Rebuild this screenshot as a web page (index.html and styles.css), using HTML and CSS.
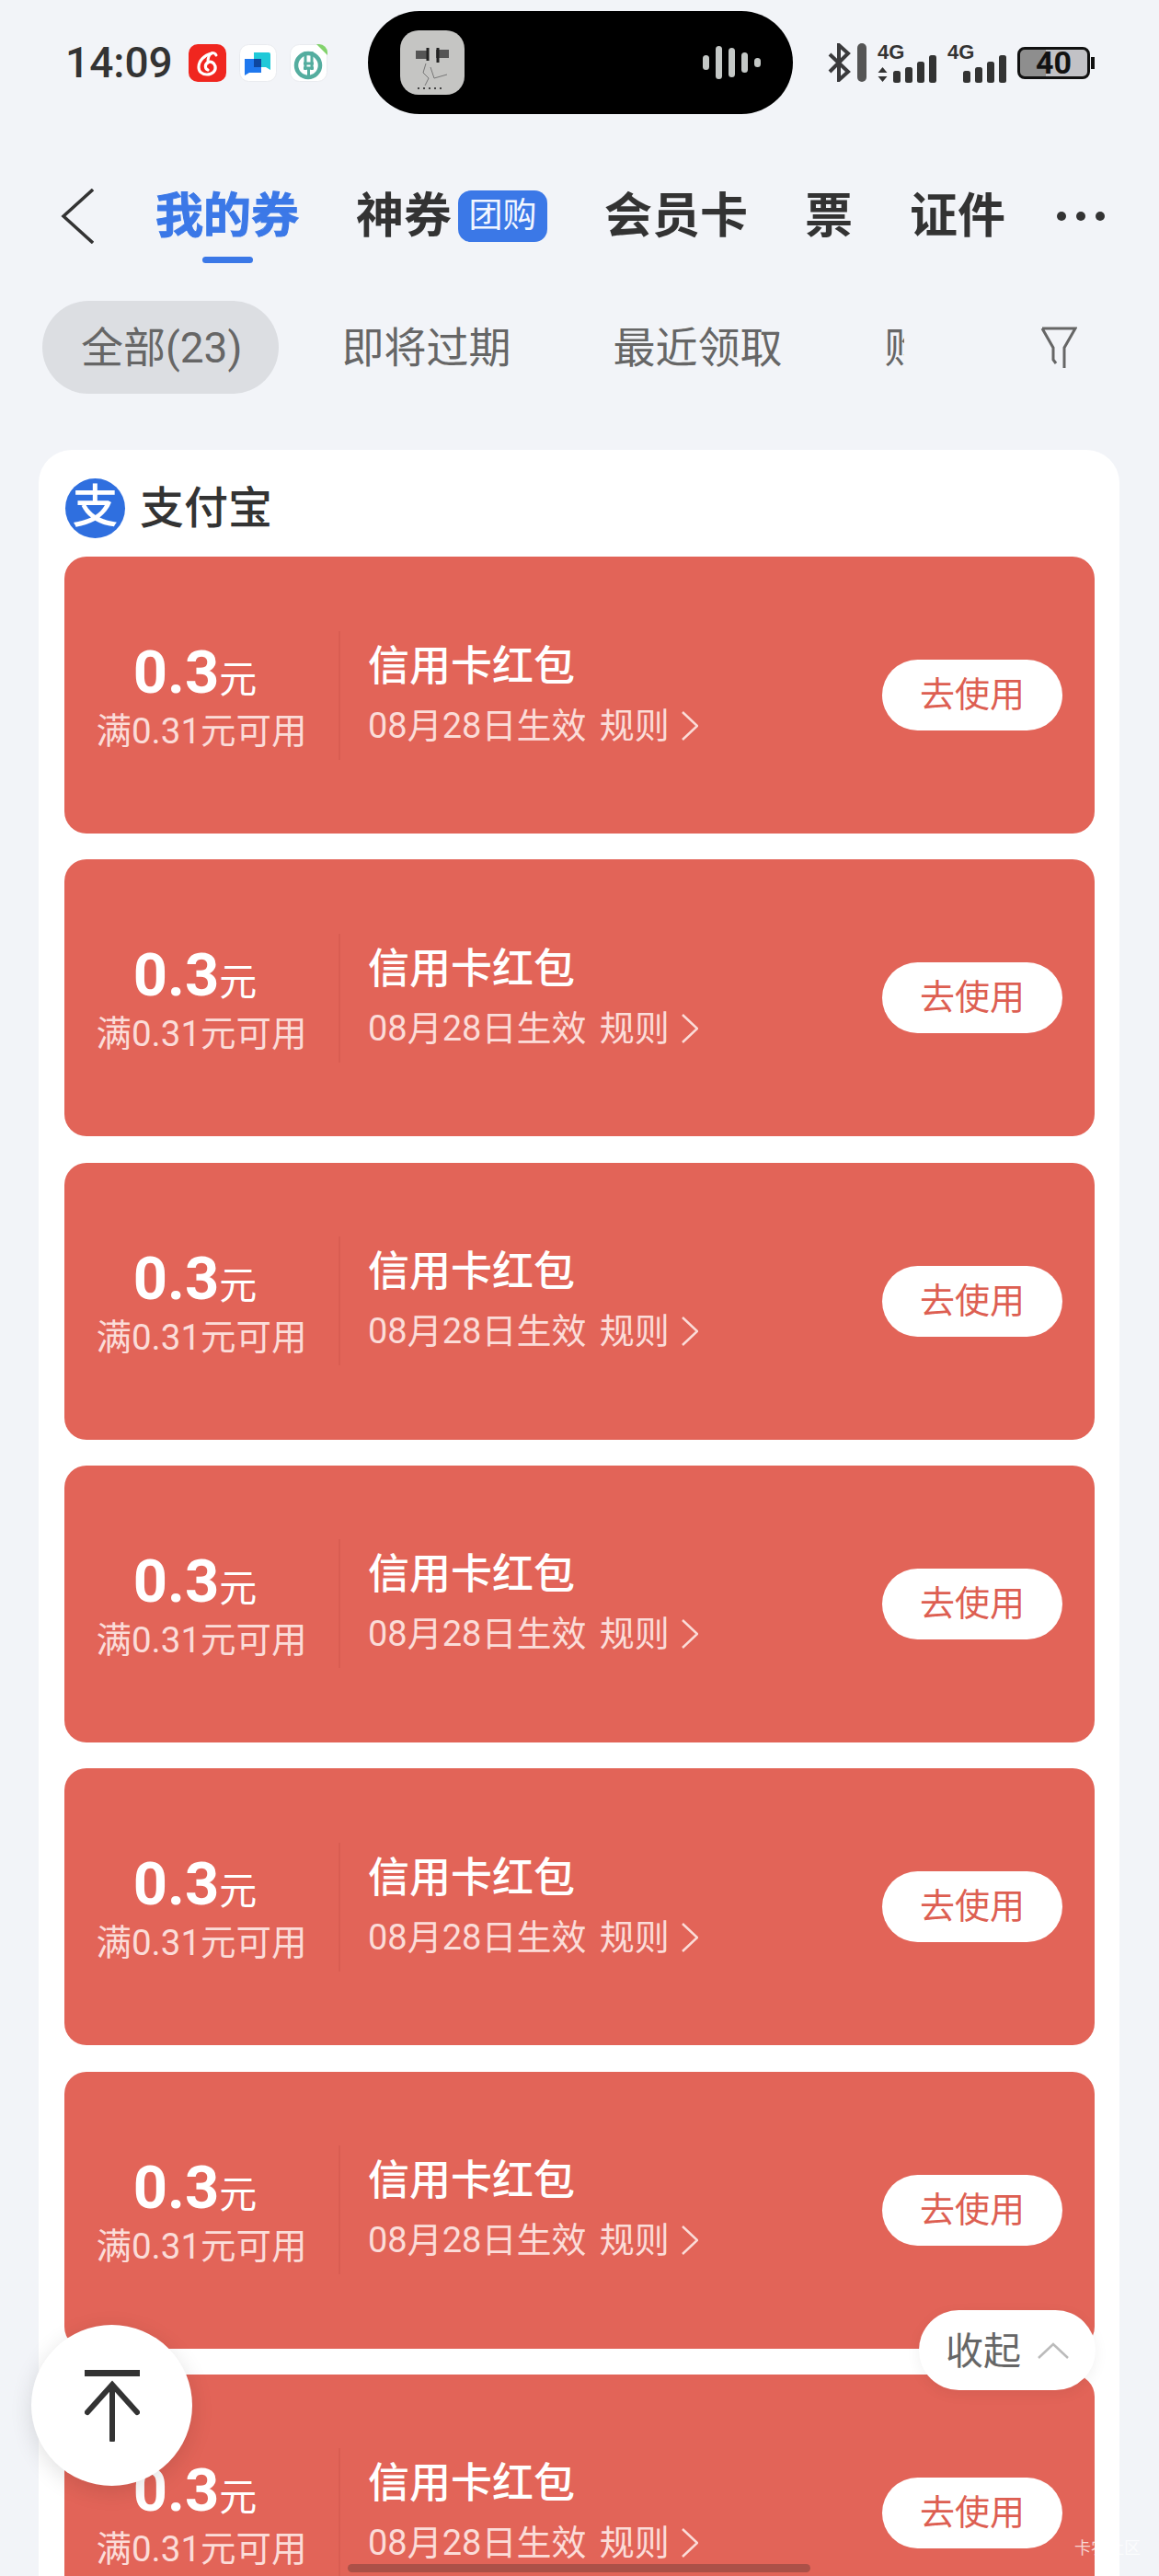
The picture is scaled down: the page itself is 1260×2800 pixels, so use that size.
FILE: index.html
```html
<!DOCTYPE html>
<html lang="zh-CN">

<head>
    <meta charset="UTF-8">
    <meta name="viewport" content="width=device-width, initial-scale=1.0">
    <title>我的券</title>
    <link rel="stylesheet" href="styles.css">
</head>

<body>
    <div class="page">
        <div class="status-bar">
            <span class="time">14:09</span>
            <div class="app-icons">
                <svg class="app-icon" viewBox="0 0 41 41">
                    <rect width="41" height="41" rx="10" fill="#f0261f" />
                    <path d="M25 10C17 12 11 18 11 25c0 5 4 8 9 8 6 0 10-4 9-9-1-4-5-6-8-4-4 2-3 7 0 8" fill="none" stroke="#fff" stroke-width="3.2" stroke-linecap="round" />
                    <path d="M21 20c0-5 1-9 4-10 2-1 4 0 5 2" fill="none" stroke="#fff" stroke-width="3" stroke-linecap="round" />
                </svg>
                <svg class="app-icon" viewBox="0 0 41 41">
                    <rect x="0.5" y="0.5" width="40" height="40" rx="10" fill="#fff" stroke="#e9ebef" />
                    <path d="M16 9h16a2 2 0 0 1 2 2v17l-5-3H16z" fill="#1fc9d8" />
                    <path d="M6 16h16a2 2 0 0 1 2 2v13H11l-5 3z" fill="#1f78ee" />
                    <rect x="16" y="16" width="8" height="9" fill="#0e479f" />
                </svg>
                <svg class="app-icon" viewBox="0 0 41 41">
                    <rect x="0.5" y="0.5" width="40" height="40" rx="10" fill="#fff" stroke="#e9ebef" />
                    <circle cx="20" cy="23" r="13" fill="none" stroke="#54ad9f" stroke-width="4.5" />
                    <path d="M17 8v20M24 8v20M15 21h11M15 26h11M20.500 26v9" fill="none" stroke="#54ad9f" stroke-width="3" />
                    <path d="M29 0h3a9 9 0 0 1 9 9v3z" fill="#82d26c" />
                </svg>
            </div>
            <div class="island">
                <svg class="album" viewBox="0 0 70 70">
                    <rect width="70" height="70" rx="20" fill="#c5c5c3" />
                    <path d="M17 22h12v9H17zM39 21h14v9H39z" fill="#555" />
                    <path d="M30 19v14M41 19v16" stroke="#222" stroke-width="3" />
                    <path d="M28 36l-3 10 6 6-4 8M33 40l4 12 14-4" fill="none" stroke="#777" stroke-width="1" />
                    <path d="M19 63h2M25 63h2M31 63h2M37 63h2M43 63h2" stroke="#444" stroke-width="2" />
                </svg>
                <div class="wave">
                    <span class="wave-bar h16"></span>
                    <span class="wave-bar h36"></span>
                    <span class="wave-bar h32"></span>
                    <span class="wave-bar h22"></span>
                    <span class="wave-bar h10"></span>
                </div>
            </div>
            <div class="status-right">
                <svg class="bluetooth" viewBox="0 0 26 42">
                    <path d="M2 12l20 19-10 9V2l10 9L2 31" fill="none" stroke="#3a3a3c" stroke-width="4" />
                </svg>
                <span class="bt-bar"></span>
                <svg class="signal" viewBox="0 0 64 43">
                    <text x="0" y="17" class="signal-text">4G</text>
                    <path d="M5.500 26l5 6H.5zM5.500 42l5-6H.5z" fill="#333" />
                    <rect x="17" y="30" width="8" height="13" rx="2.500" fill="#333" />
                    <rect x="30" y="26" width="8" height="17" rx="2.500" fill="#333" />
                    <rect x="43" y="20" width="8" height="23" rx="2.500" fill="#333" />
                    <rect x="56" y="13" width="8" height="30" rx="2.500" fill="#333" />
                </svg>
                <svg class="signal" viewBox="0 0 64 43">
                    <text x="0" y="17" class="signal-text">4G</text>
                    <rect x="17" y="30" width="8" height="13" rx="2.500" fill="#333" />
                    <rect x="30" y="26" width="8" height="17" rx="2.500" fill="#333" />
                    <rect x="43" y="20" width="8" height="23" rx="2.500" fill="#333" />
                    <rect x="56" y="13" width="8" height="30" rx="2.500" fill="#333" />
                </svg>
                <div class="battery">40</div>
            </div>
        </div>

        <div class="nav">
            <svg class="back" viewBox="0 0 36 60">
                <path d="M35 1L3 30l32 29" fill="none" stroke="#333" stroke-width="3.500" />
            </svg>
            <span class="tab active">我的券</span>
            <div class="tab-group">
                <span class="tab">神券</span>
                <span class="tab-badge">团购</span>
            </div>
            <span class="tab">会员卡</span>
            <span class="tab">票</span>
            <span class="tab">证件</span>
            <div class="more">
                <span class="dot"></span>
                <span class="dot"></span>
                <span class="dot"></span>
            </div>
        </div>

        <div class="filter-row">
            <div class="filters">
                <span class="filter selected">全部(23)</span>
                <span class="filter">即将过期</span>
                <span class="filter">最近领取</span>
                <span class="filter">购买</span>
            </div>
            <svg class="funnel" viewBox="0 0 40 46">
                <path d="M2 2h36L26 23v22M2 2l12 21v13l3 4" fill="none" stroke="#666" stroke-width="3" />
            </svg>
        </div>

        <div class="card">
            <div class="card-head">
                <span class="alipay-logo">支</span>
                <span class="card-title">支付宝</span>
            </div>
            <div class="coupons">
                <div class="coupon">
                    <div class="coupon-left">
                        <div class="amount"><span class="value">0.3</span><span class="unit">元</span></div>
                        <div class="limit">满0.31元可用</div>
                    </div>
                    <div class="coupon-body">
                        <div class="coupon-name">信用卡红包</div>
                        <div class="coupon-date">08月28日生效 规则<svg class="rule-arrow" viewBox="0 0 18 32"><path d="M1 1l16 15L1 31" fill="none" stroke="currentColor" stroke-width="2.500" /></svg></div>
                    </div>
                    <span class="use-btn">去使用</span>
                </div>
                <div class="coupon">
                    <div class="coupon-left">
                        <div class="amount"><span class="value">0.3</span><span class="unit">元</span></div>
                        <div class="limit">满0.31元可用</div>
                    </div>
                    <div class="coupon-body">
                        <div class="coupon-name">信用卡红包</div>
                        <div class="coupon-date">08月28日生效 规则<svg class="rule-arrow" viewBox="0 0 18 32"><path d="M1 1l16 15L1 31" fill="none" stroke="currentColor" stroke-width="2.500" /></svg></div>
                    </div>
                    <span class="use-btn">去使用</span>
                </div>
                <div class="coupon">
                    <div class="coupon-left">
                        <div class="amount"><span class="value">0.3</span><span class="unit">元</span></div>
                        <div class="limit">满0.31元可用</div>
                    </div>
                    <div class="coupon-body">
                        <div class="coupon-name">信用卡红包</div>
                        <div class="coupon-date">08月28日生效 规则<svg class="rule-arrow" viewBox="0 0 18 32"><path d="M1 1l16 15L1 31" fill="none" stroke="currentColor" stroke-width="2.500" /></svg></div>
                    </div>
                    <span class="use-btn">去使用</span>
                </div>
                <div class="coupon">
                    <div class="coupon-left">
                        <div class="amount"><span class="value">0.3</span><span class="unit">元</span></div>
                        <div class="limit">满0.31元可用</div>
                    </div>
                    <div class="coupon-body">
                        <div class="coupon-name">信用卡红包</div>
                        <div class="coupon-date">08月28日生效 规则<svg class="rule-arrow" viewBox="0 0 18 32"><path d="M1 1l16 15L1 31" fill="none" stroke="currentColor" stroke-width="2.500" /></svg></div>
                    </div>
                    <span class="use-btn">去使用</span>
                </div>
                <div class="coupon">
                    <div class="coupon-left">
                        <div class="amount"><span class="value">0.3</span><span class="unit">元</span></div>
                        <div class="limit">满0.31元可用</div>
                    </div>
                    <div class="coupon-body">
                        <div class="coupon-name">信用卡红包</div>
                        <div class="coupon-date">08月28日生效 规则<svg class="rule-arrow" viewBox="0 0 18 32"><path d="M1 1l16 15L1 31" fill="none" stroke="currentColor" stroke-width="2.500" /></svg></div>
                    </div>
                    <span class="use-btn">去使用</span>
                </div>
                <div class="coupon">
                    <div class="coupon-left">
                        <div class="amount"><span class="value">0.3</span><span class="unit">元</span></div>
                        <div class="limit">满0.31元可用</div>
                    </div>
                    <div class="coupon-body">
                        <div class="coupon-name">信用卡红包</div>
                        <div class="coupon-date">08月28日生效 规则<svg class="rule-arrow" viewBox="0 0 18 32"><path d="M1 1l16 15L1 31" fill="none" stroke="currentColor" stroke-width="2.500" /></svg></div>
                    </div>
                    <span class="use-btn">去使用</span>
                </div>
                <div class="coupon">
                    <div class="coupon-left">
                        <div class="amount"><span class="value">0.3</span><span class="unit">元</span></div>
                        <div class="limit">满0.31元可用</div>
                    </div>
                    <div class="coupon-body">
                        <div class="coupon-name">信用卡红包</div>
                        <div class="coupon-date">08月28日生效 规则<svg class="rule-arrow" viewBox="0 0 18 32"><path d="M1 1l16 15L1 31" fill="none" stroke="currentColor" stroke-width="2.500" /></svg></div>
                    </div>
                    <span class="use-btn">去使用</span>
                </div>
            </div>
        </div>

        <!-- floating things over the list -->
        <div class="back-top">
            <svg class="back-top-icon" viewBox="0 0 60 78">
                <path d="M0 3.500h60" fill="none" stroke="#333" stroke-width="7" />
                <path d="M3 46l27-30 27 30M30 18v58" fill="none" stroke="#333" stroke-width="6" stroke-linecap="round" />
            </svg>
        </div>
        <div class="collapse">
            <span class="collapse-text">收起</span>
            <svg class="collapse-arrow" viewBox="0 0 34 18">
                <path d="M1 17L17 2l16 15" fill="none" stroke="#bbb" stroke-width="2.500" />
            </svg>
        </div>
        <div class="home-bar"></div>
        <div class="watermark">卡农社区</div>
    </div>
</body>

</html>
```

FILE: styles.css
```css
* {
    box-sizing: border-box;
}

body {
    margin: 0;
    font-family: Roboto, "Noto Sans CJK SC", sans-serif;
    background-color: #f2f4f8;
    color: #333;
}

.page {
    position: relative;
    width: 1260px;
    height: 2800px;
    overflow: hidden;
}

/* status bar */
.status-bar {
    display: flex;
    align-items: center;
    height: 112px;
    margin-top: 12px;
    padding-left: 71px;
}

.time {
    width: 114px;
    font-size: 46px;
    font-weight: 500;
    line-height: 1;
    color: #333;
}

.app-icons {
    display: flex;
    gap: 14px;
    margin-left: 20px;
}

.app-icon {
    width: 41px;
    height: 41px;
}

.island {
    display: flex;
    align-items: center;
    justify-content: space-between;
    width: 462px;
    height: 112px;
    margin-left: 44px;
    padding: 0 35px;
    border-radius: 56px;
    background: #000;
}

.album {
    width: 70px;
    height: 70px;
}

.wave {
    display: flex;
    align-items: center;
    gap: 7px;
}

.wave-bar {
    width: 7px;
    border-radius: 4px;
    background: #c4c8c6;
}

.h10 { height: 10px; }
.h16 { height: 16px; }
.h22 { height: 22px; }
.h32 { height: 32px; }
.h36 { height: 36px; }

.status-right {
    display: flex;
    align-items: center;
    margin-left: 38px;
}

.bluetooth {
    width: 26px;
    height: 42px;
}

.bt-bar {
    width: 10px;
    height: 42px;
    margin-left: 6px;
    border-radius: 5px;
    background: #555;
}

.signal {
    width: 64px;
    height: 43px;
    margin-left: 12px;
    overflow: visible;
}

.signal-text {
    font-family: "Liberation Sans", sans-serif;
    font-size: 22px;
    font-weight: 700;
    fill: #333;
}

.battery {
    position: relative;
    width: 79px;
    height: 35px;
    margin-left: 12px;
    border: 3px solid #111;
    border-radius: 8px;
    background: linear-gradient(90deg, #8e8e8e 39%, #c2c2c6 39%);
    color: #111;
    font-size: 34px;
    font-weight: 700;
    line-height: 29px;
    text-align: center;
}

.battery::after {
    content: "";
    position: absolute;
    top: 8px;
    right: -8px;
    width: 4px;
    height: 13px;
    background: #111;
}

/* top tabs */
.nav {
    display: flex;
    align-items: center;
    gap: 62px;
    height: 60px;
    margin-top: 81px;
    padding-left: 66px;
}

.back {
    width: 36px;
    height: 60px;
    margin-right: 5px;
}

.tab {
    position: relative;
    top: 1px;
    font-size: 52px;
    font-weight: 700;
    line-height: 56px;
    color: #333;
    white-space: nowrap;
}

.tab.active {
    color: #3b78e7;
    -webkit-text-stroke: 1px #3b78e7;
}

.tab.active::after {
    content: "";
    position: absolute;
    left: 51px;
    bottom: -22px;
    width: 55px;
    height: 7px;
    border-radius: 4px;
    background: #3b78e7;
}

.tab-group {
    display: flex;
    align-items: center;
    gap: 7px;
}

.tab-badge {
    width: 97px;
    height: 56px;
    border-radius: 14px;
    background: #3b78e7;
    color: #f2f6ff;
    font-size: 37px;
    line-height: 56px;
    text-align: center;
}

.more {
    display: flex;
    gap: 11px;
    margin-left: -6px;
}

.dot {
    width: 10px;
    height: 10px;
    border-radius: 50%;
    background: #333;
}

/* filter chips */
.filter-row {
    display: flex;
    align-items: center;
    margin-top: 62px;
    padding-left: 46px;
}

.filters {
    display: flex;
    gap: 25px;
    width: 937px;
    overflow: hidden;
}

.filter {
    flex-shrink: 0;
    height: 101px;
    padding: 0 43px;
    border-radius: 51px;
    color: #666;
    font-size: 46px;
    line-height: 103px;
    white-space: nowrap;
}

.filter.selected {
    padding: 0 40px 0 42px;
    background: #dcdee2;
}

.funnel {
    width: 40px;
    height: 46px;
    margin-left: 148px;
}

/* coupon card */
.card {
    height: 2400px;
    margin: 61px 43px 0 42px;
    padding: 31px 27px 0 28px;
    border-radius: 36px 36px 0 0;
    background: #fff;
}

.card-head {
    display: flex;
    align-items: center;
    height: 64px;
    margin-bottom: 21px;
    padding-left: 1px;
}

.alipay-logo {
    width: 65px;
    height: 65px;
    border-radius: 50%;
    background: #2f6fdf;
    color: #fff;
    font-size: 50px;
    font-weight: 500;
    line-height: 62px;
    text-align: center;
}

.card-title {
    margin-left: 16px;
    padding-bottom: 8px;
    font-size: 48px;
    font-weight: 500;
    color: #333;
}

.coupons {
    display: flex;
    flex-direction: column;
    gap: 28.33px;
}

.coupon {
    flex-shrink: 0;
    display: flex;
    align-items: center;
    height: 301px;
    padding-right: 35px;
    border-radius: 24px;
    background: #e26458;
    color: #fff;
}

.coupon-left {
    width: 298px;
    padding-top: 2px;
    text-align: center;
}

.amount {
    padding-right: 14px;
    line-height: 72px;
}

.value {
    font-size: 65px;
    font-weight: 700;
}

.unit {
    font-size: 41px;
}

.limit {
    margin-top: -12px;
    color: #fbdcd8;
    font-size: 38.5px;
    line-height: 46px;
    white-space: nowrap;
}

.coupon-body {
    flex: 1;
    height: 140px;
    padding-left: 30px;
    border-left: 2px solid #d95d52;
}

.coupon-name {
    margin-top: 14px;
    font-size: 45px;
    font-weight: 500;
    line-height: 50px;
}

.coupon-date {
    display: flex;
    align-items: center;
    margin-top: 16px;
    color: #fbdcd8;
    font-size: 38px;
    line-height: 46px;
    word-spacing: 5px;
    white-space: pre;
}

.rule-arrow {
    width: 18px;
    height: 32px;
    margin-left: 13px;
    color: #fbdcd8;
}

.use-btn {
    width: 196px;
    height: 77px;
    border-radius: 39px;
    background: #fff;
    color: #dd5f52;
    font-size: 38px;
    line-height: 77px;
    text-align: center;
}

/* overlays */
.back-top {
    position: absolute;
    left: 34px;
    top: 2527px;
    display: flex;
    align-items: center;
    justify-content: center;
    width: 175px;
    height: 175px;
    border-radius: 50%;
    background: #fff;
    box-shadow: 0 6px 24px rgba(0, 0, 0, 0.12);
}

.back-top-icon {
    width: 60px;
    height: 78px;
}

.collapse {
    position: absolute;
    left: 999px;
    top: 2511px;
    display: flex;
    align-items: center;
    width: 192px;
    height: 87px;
    padding-left: 29px;
    border-radius: 44px;
    background: #fff;
    box-shadow: 0 4px 16px rgba(0, 0, 0, 0.06);
    color: #666;
    font-size: 41px;
}

.collapse-text {
    padding-bottom: 6px;
}

.collapse-arrow {
    width: 34px;
    height: 18px;
    margin-left: 18px;
}

.home-bar {
    position: absolute;
    left: 378px;
    top: 2787px;
    width: 503px;
    height: 9px;
    border-radius: 5px;
    background: #ab5148;
}

.watermark {
    position: absolute;
    left: 1168px;
    top: 2759px;
    color: rgba(255, 255, 255, 0.75);
    font-size: 18px;
    line-height: 22px;
}
```
